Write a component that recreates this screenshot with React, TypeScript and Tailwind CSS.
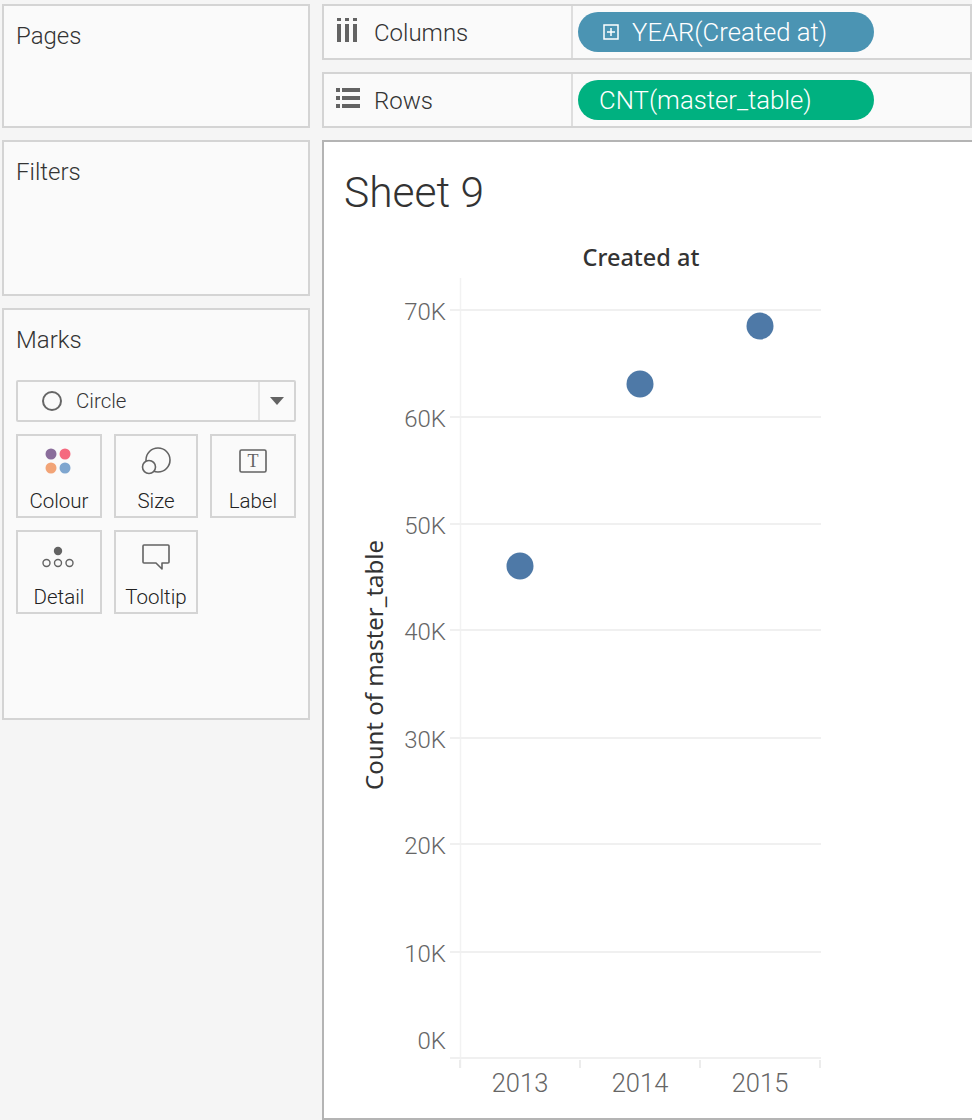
import React from 'react';

const panelClass = 'border-2 border-[#d4d4d4] bg-[#fafafa]';
const ink = '#636363';

const ColumnsIcon = () => (
  <svg width="22" height="24" viewBox="0 0 22 24" fill={ink}>
    <rect x="1" y="0" width="4" height="3" />
    <rect x="1" y="6" width="4" height="18" />
    <rect x="9" y="0" width="4" height="3" />
    <rect x="9" y="6" width="4" height="18" />
    <rect x="17" y="0" width="4" height="3" />
    <rect x="17" y="6" width="4" height="18" />
  </svg>
);

const RowsIcon = () => (
  <svg width="24" height="20" viewBox="0 0 24 20" fill={ink}>
    <rect x="0" y="0" width="4" height="4" />
    <rect x="6" y="0" width="18" height="4" />
    <rect x="0" y="8" width="4" height="4" />
    <rect x="6" y="8" width="18" height="4" />
    <rect x="0" y="16" width="4" height="4" />
    <rect x="6" y="16" width="18" height="4" />
  </svg>
);

const PlusBox = () => (
  <svg width="16" height="16" viewBox="0 0 16 16" fill="none" stroke="#fff" strokeWidth="1.5">
    <rect x="1" y="1" width="14" height="14" />
    <path d="M8 4v8M4 8h8" />
  </svg>
);

const ColourIcon = () => (
  <svg className="-ml-[2px]" width="26" height="26" viewBox="0 0 26 26">
    <circle cx="6" cy="6" r="5.5" fill="#8a6d9b" />
    <circle cx="20" cy="6" r="5.5" fill="#f5697f" />
    <circle cx="6" cy="20" r="5.5" fill="#f2a477" />
    <circle cx="20" cy="20" r="5.5" fill="#7fa6cf" />
  </svg>
);

const SizeIcon = () => (
  <svg width="30" height="28" viewBox="0 0 30 28" fill="none" stroke={ink} strokeWidth="1.6">
    <circle cx="17" cy="13" r="12" />
    <circle cx="8" cy="20" r="6.5" fill="#fafafa" />
  </svg>
);

const LabelIcon = () => (
  <svg width="28" height="24" viewBox="0 0 28 24" fill="none">
    <rect x="1" y="1" width="26" height="22" rx="1.5" stroke={ink} strokeWidth="1.6" />
    <text x="14" y="18" textAnchor="middle" fontFamily="'Liberation Serif', serif" fontSize="18" fill={ink}>T</text>
  </svg>
);

const DetailIcon = () => (
  <svg className="-ml-[2px]" width="32" height="22" viewBox="0 0 32 22" fill="none" stroke={ink} strokeWidth="1.4">
    <circle cx="16" cy="5" r="4.2" fill={ink} stroke="none" />
    <circle cx="4.5" cy="17" r="3.5" />
    <circle cx="16" cy="17" r="3.5" />
    <circle cx="27.5" cy="17" r="3.5" />
  </svg>
);

const TooltipIcon = () => (
  <svg width="28" height="26" viewBox="0 0 28 26" fill="none" stroke={ink} strokeWidth="1.6" strokeLinejoin="round">
    <path d="M2 1h24a1 1 0 0 1 1 1v16a1 1 0 0 1-1 1h-6v6l-6-6H2a1 1 0 0 1-1-1V2a1 1 0 0 1 1-1z" />
  </svg>
);

const markCards = [
  { label: 'Colour', icon: <ColourIcon /> },
  { label: 'Size', icon: <SizeIcon /> },
  { label: 'Label', icon: <LabelIcon /> },
  { label: 'Detail', icon: <DetailIcon /> },
  { label: 'Tooltip', icon: <TooltipIcon /> },
];

const Shelf = ({ icon, label, pill, color }: { icon: React.ReactNode; label: string; pill: React.ReactNode; color: string }) => (
  <div className={`${panelClass} flex h-14`}>
    <div className="flex w-[249px] items-center border-r-2 border-[#dedede] pl-[12px]">
      <div className="-mt-1 flex w-[38px]">{icon}</div>
      <span className="pt-[2px] text-[24px] font-light text-[#333]">{label}</span>
    </div>
    <div className="flex flex-1 items-center pl-[5px]">
      <div className={`flex h-10 w-[296px] items-center rounded-full ${color} text-[25.7px] font-light text-white`}>{pill}</div>
    </div>
  </div>
);

const years = [
  { label: '2013', x: 520, y: 566 },
  { label: '2014', x: 640, y: 384 },
  { label: '2015', x: 760, y: 326 },
];

const ticks = [
  { label: '70K', y: 310, base: 320 },
  { label: '60K', y: 417, base: 427 },
  { label: '50K', y: 524, base: 534 },
  { label: '40K', y: 630, base: 640 },
  { label: '30K', y: 738, base: 748 },
  { label: '20K', y: 844, base: 854 },
  { label: '10K', y: 952, base: 962 },
  { label: '0K', y: 1058, base: 1049 },
];

const Chart = () => (
  <svg className="block" width="646" height="886" viewBox="324 232 646 886" fontFamily="Roboto, sans-serif">
    <text x="641" y="266" textAnchor="middle" fontFamily="'Noto Sans', sans-serif" fontWeight="500" fontSize="23.5" fill="#333">Created at</text>
    <line x1="460.5" x2="460.5" y1="278" y2="1068" stroke="#f2f2f2" strokeWidth="1.5" />
    {ticks.map((t) => (
      <g key={t.label}>
        <line x1="450" x2="821" y1={t.y} y2={t.y} stroke="#f0f0f0" strokeWidth="2" />
        <text x="446" y={t.base} textAnchor="end" fontSize="24" fontWeight="300" fill="#666">{t.label}</text>
      </g>
    ))}
    {[460, 580, 700, 820].map((x) => (
      <line key={x} x1={x} x2={x} y1="1060" y2="1068" stroke="#ececec" strokeWidth="2" />
    ))}
    {years.map((d) => (
      <g key={d.label}>
        <circle cx={d.x} cy={d.y} r="13.5" fill="#4e79a7" />
        <text x={d.x} y="1092" textAnchor="middle" fontSize="25.5" fontWeight="300" fill="#666">{d.label}</text>
      </g>
    ))}
    <text transform="translate(383 665) rotate(-90)" textAnchor="middle" fontFamily="'Noto Sans', sans-serif" fontSize="24" fill="#333">Count of master_table</text>
  </svg>
);

export default function App() {
  return (
    <div className="flex h-[1120px] w-[972px] gap-3 overflow-hidden bg-[#f5f5f5] pl-[2px] pt-[4px] font-['Roboto',sans-serif]">
      <div className="flex w-[308px] flex-col gap-3">
        <div className={`${panelClass} h-[124px] px-3 pt-4 text-[24px] font-light leading-7 text-[#333]`}>Pages</div>
        <div className={`${panelClass} h-[156px] px-3 pt-4 text-[24px] font-light leading-7 text-[#333]`}>Filters</div>
        <div className={`${panelClass} h-[412px] px-3 pt-4`}>
          <div className="text-[24px] font-light leading-7 text-[#333]">Marks</div>
          <div className="mt-[26px] flex h-[42px] w-[280px] rounded-[2px] border-2 border-[#d4d4d4]">
            <div className="flex flex-1 items-center pl-[24px]">
              <span className="mr-[14px] h-5 w-5 rounded-full border-2 border-[#666]" />
              <span className="text-[20.5px] font-light text-[#333]">Circle</span>
            </div>
            <div className="flex w-[36px] items-center justify-center border-l-2 border-[#e4e4e4]">
              <span className="h-0 w-0 border-x-[7px] border-t-[8px] border-x-transparent border-t-[#636363]" />
            </div>
          </div>
          <div className="mt-[12px] grid w-[280px] grid-cols-[86px_84px_86px] gap-x-3 gap-y-3">
            {markCards.map((c) => (
              <div key={c.label} className="flex h-[84px] flex-col items-center border-2 border-[#d4d4d4] pt-[10px]">
                <div className="flex h-[30px] items-center">{c.icon}</div>
                <span className="mt-auto pb-[3px] text-[20.5px] font-light leading-6 text-[#222]">{c.label}</span>
              </div>
            ))}
          </div>
        </div>
      </div>
      <div className="flex flex-1 flex-col gap-3">
        <Shelf
          icon={<ColumnsIcon />}
          label="Columns"
          color="bg-[#4b94b3]"
          pill={
            <>
              <span className="ml-[25px] mr-[13px] flex"><PlusBox /></span>
              <span>YEAR(Created at)</span>
            </>
          }
        />
        <Shelf icon={<RowsIcon />} label="Rows" color="bg-[#00b180]" pill={<span className="ml-[21px]">CNT(master_table)</span>} />
        <div className="flex-1 border-2 border-r-0 border-[#b4b4b4] bg-white">
          <div className="h-[90px] pl-[20px] pt-[26px] text-[42.5px] font-light leading-[50px] text-[#333]">Sheet 9</div>
          <Chart />
        </div>
      </div>
    </div>
  );
}
